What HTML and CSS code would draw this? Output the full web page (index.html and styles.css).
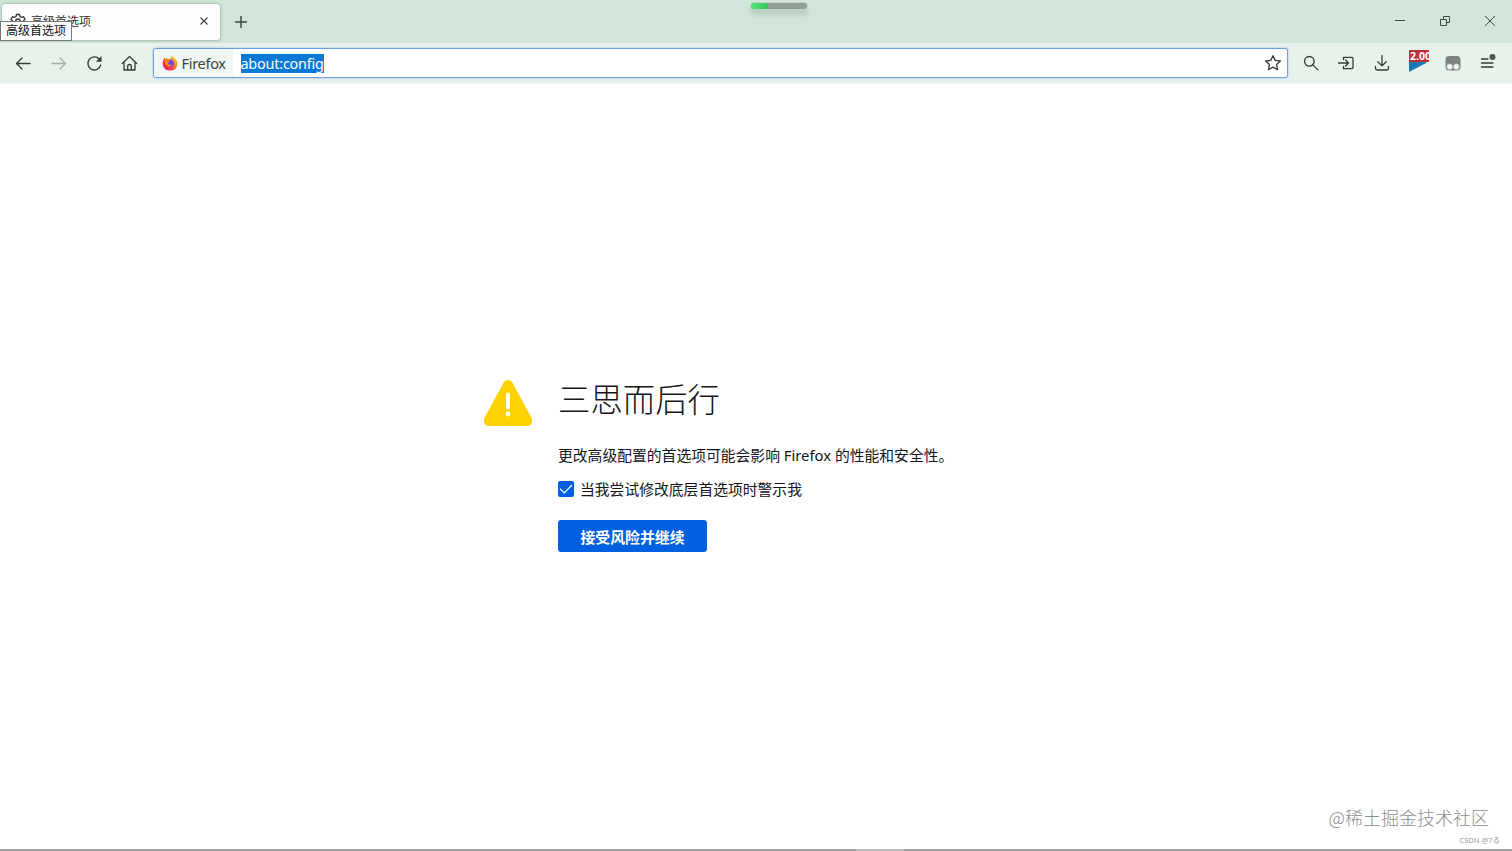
FILE: index.html
```html
<!DOCTYPE html>
<html lang="zh-CN">
<head>
    <meta charset="UTF-8">
    <meta name="viewport" content="width=device-width, initial-scale=1.0">
    <title>高级首选项</title>
    <link rel="stylesheet" href="styles.css">
</head>
<body>
    <header class="tab-bar">
        <div class="tab">
            <svg class="tab-icon" width="16" height="16" viewBox="0 0 16 16">
                <path d="M6.500 1.500h3l.5 2 1.600.9 2-.6 1.400 2.500-1.500 1.500v1l1.500 1.500-1.500 2.500-2-.6-1.500.9-.5 2h-3l-.5-2-1.600-.9-2 .6L1 10.300l1.500-1.500v-1L1 6.300l1.400-2.500 2 .6L6 3.500z"/>
                <circle cx="8" cy="8.300" r="2.300"/>
            </svg>
            <span class="tab-title">高级首选项</span>
            <svg class="tab-close" width="10" height="10" viewBox="0 0 10 10">
                <path d="M1.500 1.500l7 7M8.500 1.500l-7 7"/>
            </svg>
        </div>
        <svg class="new-tab" width="14" height="14" viewBox="0 0 14 14">
            <path d="M7 1v12M1 7h12"/>
        </svg>
        <div class="capture-bar"><div class="capture-level"></div></div>
        <div class="window-controls">
            <svg width="12" height="12" viewBox="0 0 12 12"><path d="M1 5.500h10"/></svg>
            <svg width="12" height="12" viewBox="0 0 12 12"><path d="M1.500 4.500h6v6h-6zM4.500 4.500v-3h6v6h-3"/></svg>
            <svg width="12" height="12" viewBox="0 0 12 12"><path d="M1 1l10 10M11 1L1 11"/></svg>
        </div>
        <div class="tooltip">高级首选项</div>
    </header>

    <nav class="toolbar">
        <div class="nav-buttons">
            <svg width="18" height="18" viewBox="0 0 18 18"><path d="M16 9.500H2.500M8 4L2.500 9.500 8 15"/></svg>
            <svg class="disabled" width="18" height="18" viewBox="0 0 18 18"><path d="M2 9.500h13.500M10 4l5.500 5.500L10 15"/></svg>
            <svg width="18" height="18" viewBox="0 0 18 18">
                <path d="M15.700 11A6.500 6.500 0 1 1 14.300 5.200"/>
                <path class="solid" d="M16.500 2v5.700h-5.700z"/>
            </svg>
            <svg width="18" height="18" viewBox="0 0 18 18"><path d="M1.300 9.500L8.500 2.500l7.200 7M3 8.300V16h11V8.300M6.700 16v-4.200q0-1.300 1.800-1.300t1.800 1.300V16"/></svg>
        </div>

        <div class="url-bar">
            <div class="identity">
                <svg width="16" height="16" viewBox="0 0 16 16">
                    <defs>
                        <linearGradient id="flame" x1="1" y1="0" x2="0.200" y2="1">
                            <stop offset="0" stop-color="#ffe83d"/>
                            <stop offset="0.400" stop-color="#ff980e"/>
                            <stop offset="0.750" stop-color="#ff3647"/>
                            <stop offset="1" stop-color="#e31587"/>
                        </linearGradient>
                    </defs>
                    <path fill="url(#flame)" d="M10 .5q1 1.500 2.300 2.600Q16 6 15.500 9.200 14.500 15.500 8 15.500T.5 8.700Q.5 5 2.400 2.400l1 1.600L5 2.700l.4 1.500 3-.3Q9.300 2.500 10 .5z"/>
                    <circle cx="8.200" cy="8.200" r="3.700" fill="#7542e5"/>
                    <path fill="#ff8a16" d="M2.700 5.300Q6 3.800 8 5.900L6.200 7.300q-.5 2.300 2 2.500 1 0 2-.6-1 3-4 2.200Q2.500 10 2.700 5.300z"/>
                </svg>
                <span>Firefox</span>
            </div>
            <span class="url-text">about:config</span>
            <svg class="star" width="18" height="18" viewBox="0 0 18 18">
                <path d="M9 1.700l2.200 4.700 5.200.6-3.900 3.500 1.100 5.200L9 13.100l-4.600 2.600 1.100-5.200L1.600 7l5.200-.6z"/>
            </svg>
        </div>

        <div class="actions">
            <svg width="18" height="18" viewBox="0 0 18 18"><circle cx="7.300" cy="7.300" r="4.800"/><path d="M10.900 10.900l5 5"/></svg>
            <svg width="18" height="18" viewBox="0 0 18 18"><path d="M6.500 5.500V3.300h8.200q1.300 0 1.300 1.300v8.800q0 1.300-1.300 1.300H6.500v-2.200M1.500 9h10M8.500 6l3 3-3 3"/></svg>
            <svg width="18" height="18" viewBox="0 0 18 18"><path d="M9 1.500v10M4.800 7.700L9 11.900l4.200-4.200M2.500 12.500v1.700q0 1.800 1.800 1.800h9.400q1.800 0 1.800-1.800v-1.700"/></svg>
            <div class="extension">
                <svg width="20" height="20" viewBox="0 0 20 20"><path class="flag" d="M1 0h17v9L1 18z"/></svg>
                <span class="extension-badge">2.00</span>
            </div>
            <svg width="18" height="18" viewBox="0 0 18 18">
                <rect class="monkey" x="1.500" y="2" width="15" height="14.500" rx="3.500"/>
                <circle class="eye" cx="5.700" cy="12.700" r="2.900"/>
                <circle class="eye" cx="12.300" cy="12.700" r="2.900"/>
            </svg>
            <svg class="menu" width="20" height="18" viewBox="0 0 20 18">
                <path d="M3.500 5h6.500M3.500 9h11.500M3.500 13h11.500"/>
                <circle class="dot" cx="14.500" cy="3" r="3"/>
            </svg>
        </div>
    </nav>

    <main class="page">
        <section class="warning">
            <svg class="warning-icon" width="50" height="48" viewBox="0 0 50 48">
                <path class="triangle" d="M20.200 4.200Q22 1 25 1t4.800 3.200L48.300 38.500q1.700 3.300.2 5.900Q47 47 43.500 47h-37Q3 47 1.500 44.400q-1.500-2.600.2-5.900z"/>
                <path class="mark" d="M25 15.500v13"/>
                <circle class="mark-dot" cx="25" cy="35" r="2.400"/>
            </svg>
            <div class="warning-body">
                <h1>三思而后行</h1>
                <p>更改高级配置的首选项可能会影响 <span class="brand">Firefox</span> 的性能和安全性。</p>
                <div class="check-row">
                    <span class="checkbox">
                        <svg width="16" height="16" viewBox="0 0 16 16"><path d="M2 7.800l4.300 4.200L14 4"/></svg>
                    </span>
                    <span>当我尝试修改底层首选项时警示我</span>
                </div>
                <button class="accept">接受风险并继续</button>
            </div>
        </section>
        <div class="watermark">
            <div class="watermark-main">@稀土掘金技术社区</div>
            <div class="watermark-sub">CSDN @7る</div>
        </div>
    </main>
    <footer class="bottom-edge"><div class="edge-gap"></div></footer>
</body>
</html>
```

FILE: styles.css
```css
* {
    margin: 0;
    padding: 0;
    box-sizing: border-box;
}

body {
    width: 100%;
    height: 100vh;
    display: flex;
    flex-direction: column;
    overflow: hidden;
    background: #fff;
    color: #15141a;
    font-family: "Noto Sans", "Noto Sans CJK SC", sans-serif;
}

svg {
    display: block;
    flex: none;
}

/* Tabs */
.tab-bar {
    position: relative;
    height: 43px;
    display: flex;
    align-items: center;
    background: #d1e5d9;
}

.tab {
    width: 218px;
    height: 36px;
    margin-left: 2px;
    padding: 0 11px 2px 8px;
    display: flex;
    align-items: center;
    background: #fdfefd;
    border-radius: 3px;
    box-shadow: 0 0 3px rgba(50, 80, 65, 0.55);
}

.tab-icon {
    fill: none;
    stroke: #333;
    stroke-width: 1.3;
}

.tab-title {
    flex: 1;
    margin-left: 5px;
    font-size: 12px;
    color: #333;
}

.tab-close,
.new-tab {
    fill: none;
    stroke: #3c4540;
    stroke-width: 1.1;
}

.new-tab {
    margin-left: 14px;
    stroke-width: 1.4;
}

.tooltip {
    position: absolute;
    top: 21px;
    left: 0;
    width: 72px;
    height: 20px;
    padding-left: 5px;
    border: 1px solid #777;
    background: #fff;
    color: #111;
    font-size: 12px;
    line-height: 18px;
    white-space: nowrap;
}

.capture-bar {
    position: absolute;
    top: 2px;
    left: 750px;
    width: 58px;
    height: 8px;
    overflow: hidden;
    border: 1px solid #c4d5ca;
    border-radius: 4px;
    background: #8d9e94;
    box-shadow: 0 5px 5px rgba(90, 120, 105, 0.2);
}

.capture-level {
    width: 17px;
    height: 100%;
    background: linear-gradient(90deg, #55e476, #35c55a);
}

.window-controls {
    margin-left: auto;
    margin-right: 16px;
    margin-bottom: 1px;
    display: flex;
    gap: 33px;
}

.window-controls svg {
    fill: none;
    stroke: #3f4b45;
    stroke-width: 1;
}

/* Toolbar */
.toolbar {
    height: 41px;
    display: flex;
    align-items: center;
    background: #e7f2eb;
    border-bottom: 1px solid #f3f8f5;
}

.nav-buttons {
    display: flex;
    gap: 17.500px;
    margin-left: 14px;
}

.toolbar svg {
    fill: none;
    stroke: #343a37;
    stroke-width: 1.3;
    stroke-linejoin: round;
    stroke-linecap: round;
}

.toolbar .disabled {
    stroke: #a4ada8;
}

.toolbar .solid {
    fill: #343a37;
    stroke: none;
}

.url-bar {
    width: 1135px;
    height: 30px;
    margin-left: 14px;
    display: flex;
    align-items: center;
    background: #fff;
    border: 1px solid #6c9fe0;
    border-radius: 3px;
    box-shadow: 0 0 2px #82aee5;
}

.identity {
    width: 79px;
    height: 28px;
    padding-left: 8px;
    display: flex;
    align-items: center;
    gap: 4px;
    background: #f0f6f2;
    border-radius: 2px 0 0 2px;
    color: #3d4540;
    font-size: 14.500px;
    letter-spacing: -0.3px;
}

.toolbar .identity svg {
    stroke: none;
}

.url-text {
    margin-left: 8px;
    background: #0878d7;
    color: #fff;
    font-size: 14.400px;
    line-height: 19px;
    letter-spacing: -0.2px;
}

.star {
    margin-left: auto;
    margin-right: 5px;
}

.actions {
    display: flex;
    align-items: center;
    gap: 17.500px;
    margin-left: 14px;
}

.extension {
    position: relative;
    width: 18px;
    height: 18px;
}

.toolbar .flag {
    fill: #1679b5;
    stroke: none;
}

.extension-badge {
    position: absolute;
    top: -4px;
    left: 1px;
    width: 20px;
    height: 12px;
    padding-left: 1px;
    overflow: hidden;
    background: #bd3038;
    color: #fff;
    font: bold 10.500px/12px "Noto Sans", sans-serif;
}

.toolbar .monkey {
    fill: #7d8480;
    stroke: none;
}

.toolbar .eye {
    fill: #f5f8f6;
    stroke: #a4aaa6;
    stroke-width: 0.5;
}

.menu {
    margin-left: -1px;
}

.toolbar .dot {
    fill: #4d5550;
    stroke: none;
}

/* Page */
.page {
    position: relative;
    flex: 1;
}

.warning {
    display: flex;
    gap: 25px;
    padding: 290px 0 0 483px;
}

.warning-icon {
    margin-top: 5px;
}

.triangle {
    fill: #ffd100;
}

.mark {
    stroke: #fff;
    stroke-width: 4;
    stroke-linecap: round;
}

.mark-dot {
    fill: #fff;
}

.warning-body {
    font-size: 14.800px;
    line-height: 22px;
}

.warning-body h1 {
    height: 48px;
    font-family: "Noto Sans CJK SC", sans-serif;
    font-size: 32.400px;
    font-weight: 300;
    line-height: 48px;
}

.warning-body p {
    margin-top: 22px;
    white-space: nowrap;
}

.check-row {
    display: flex;
    align-items: center;
    gap: 6px;
    margin-top: 12px;
}

.checkbox {
    width: 16px;
    height: 16px;
    border-radius: 2px;
    background: #0060df;
}

.checkbox path {
    fill: none;
    stroke: #fff;
    stroke-width: 1.2;
}

.accept {
    width: 149px;
    height: 32px;
    margin-top: 20px;
    display: block;
    border: 0;
    border-radius: 3px;
    background: #0060df;
    color: #fff;
    font: bold 14.900px "Noto Sans CJK SC", sans-serif;
}

.watermark {
    position: absolute;
    right: 12px;
    bottom: 3px;
    text-align: right;
}

.watermark-main {
    margin-right: 11px;
    color: #8e8e8e;
    font-family: "Noto Sans CJK SC", sans-serif;
    font-size: 18px;
    font-weight: 300;
    line-height: 26px;
}

.watermark-sub {
    margin-top: 4px;
    color: #999;
    font-size: 7.500px;
    line-height: 12px;
}

.bottom-edge {
    height: 2px;
    background: #a5a5a5;
}

.edge-gap {
    width: 48px;
    height: 2px;
    margin-left: 856px;
    background: #bbb;
}
```
